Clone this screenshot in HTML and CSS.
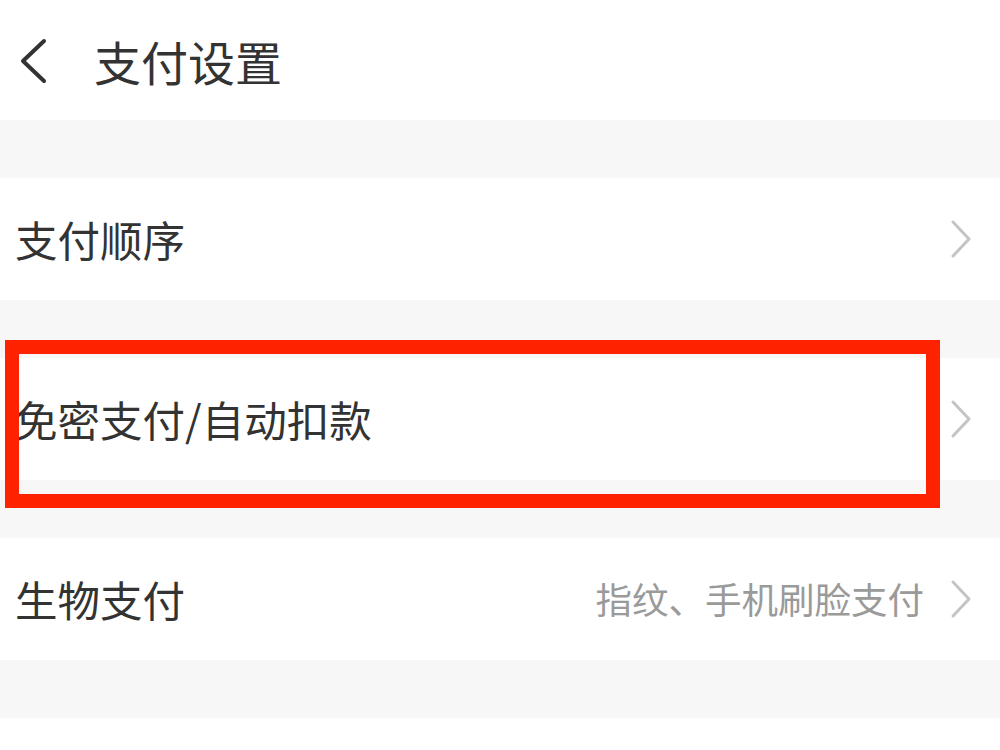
FILE: index.html
```html
<!DOCTYPE html>
<html lang="zh-CN">
<head>
<meta charset="utf-8">
<title>支付设置</title>
<link rel="stylesheet" href="styles.css">
</head>
<body>
<div class="page">
  <header class="header">
    <svg class="back" width="30" height="46" viewBox="0 0 30 46"><path d="M26 3 L5 23 L26 43" fill="none" stroke="#333" stroke-width="4" stroke-linecap="round" stroke-linejoin="round"/></svg>
    <h1 class="title">支付设置</h1>
  </header>
  <div class="gap"></div>
  <div class="row">
    <span class="label">支付顺序</span>
    <svg class="chev" width="22" height="40" viewBox="0 0 22 40"><path d="M3 3 L19 20 L3 37" fill="none" stroke="#c4c4c4" stroke-width="3" stroke-linecap="round" stroke-linejoin="round"/></svg>
  </div>
  <div class="gap"></div>
  <div class="row">
    <span class="label">免密支付/自动扣款</span>
    <svg class="chev" width="22" height="40" viewBox="0 0 22 40"><path d="M3 3 L19 20 L3 37" fill="none" stroke="#c4c4c4" stroke-width="3" stroke-linecap="round" stroke-linejoin="round"/></svg>
  </div>
  <div class="gap"></div>
  <div class="row">
    <span class="label">生物支付</span>
    <span class="value">指纹、手机刷脸支付</span>
    <svg class="chev" width="22" height="40" viewBox="0 0 22 40"><path d="M3 3 L19 20 L3 37" fill="none" stroke="#c4c4c4" stroke-width="3" stroke-linecap="round" stroke-linejoin="round"/></svg>
  </div>
  <div class="gap"></div>
  <div class="row tail"></div>
  <div class="highlight"></div>
</div>
</body>
</html>
```
FILE: styles.css
```css
* { box-sizing: border-box; }
html, body { margin: 0; padding: 0; }
body {
  background: #f7f7f7;
  font-family: "Noto Sans CJK SC", "Noto Sans", sans-serif;
  color: #333;
}
.page {
  position: relative;
  width: 1000px;
  height: 750px;
  overflow: hidden;
}
.header {
  height: 120px;
  background: #fff;
  display: flex;
  align-items: center;
  padding-left: 18px;
}
.back { margin-top: 2px; }
.title {
  margin: 0 0 0 46px;
  font-size: 47px;
  font-weight: 400;
  line-height: 1;
  color: #333;
}
.gap {
  height: 58px;
  background: #f7f7f7;
}
.row {
  height: 122px;
  background: #fff;
  display: flex;
  align-items: center;
  padding: 0 28px 0 15px;
}
.row.tail { height: 40px; }
.label {
  font-size: 42.5px;
  line-height: 1;
  color: #333;
  flex: 1;
}
.value {
  font-size: 36.5px;
  line-height: 1;
  color: #9a9a9a;
  margin-right: 26px;
}
.chev { flex: none; }
.highlight {
  position: absolute;
  left: 5px;
  top: 340px;
  width: 935px;
  height: 168px;
  border: 14px solid #ff2200;
}
```
